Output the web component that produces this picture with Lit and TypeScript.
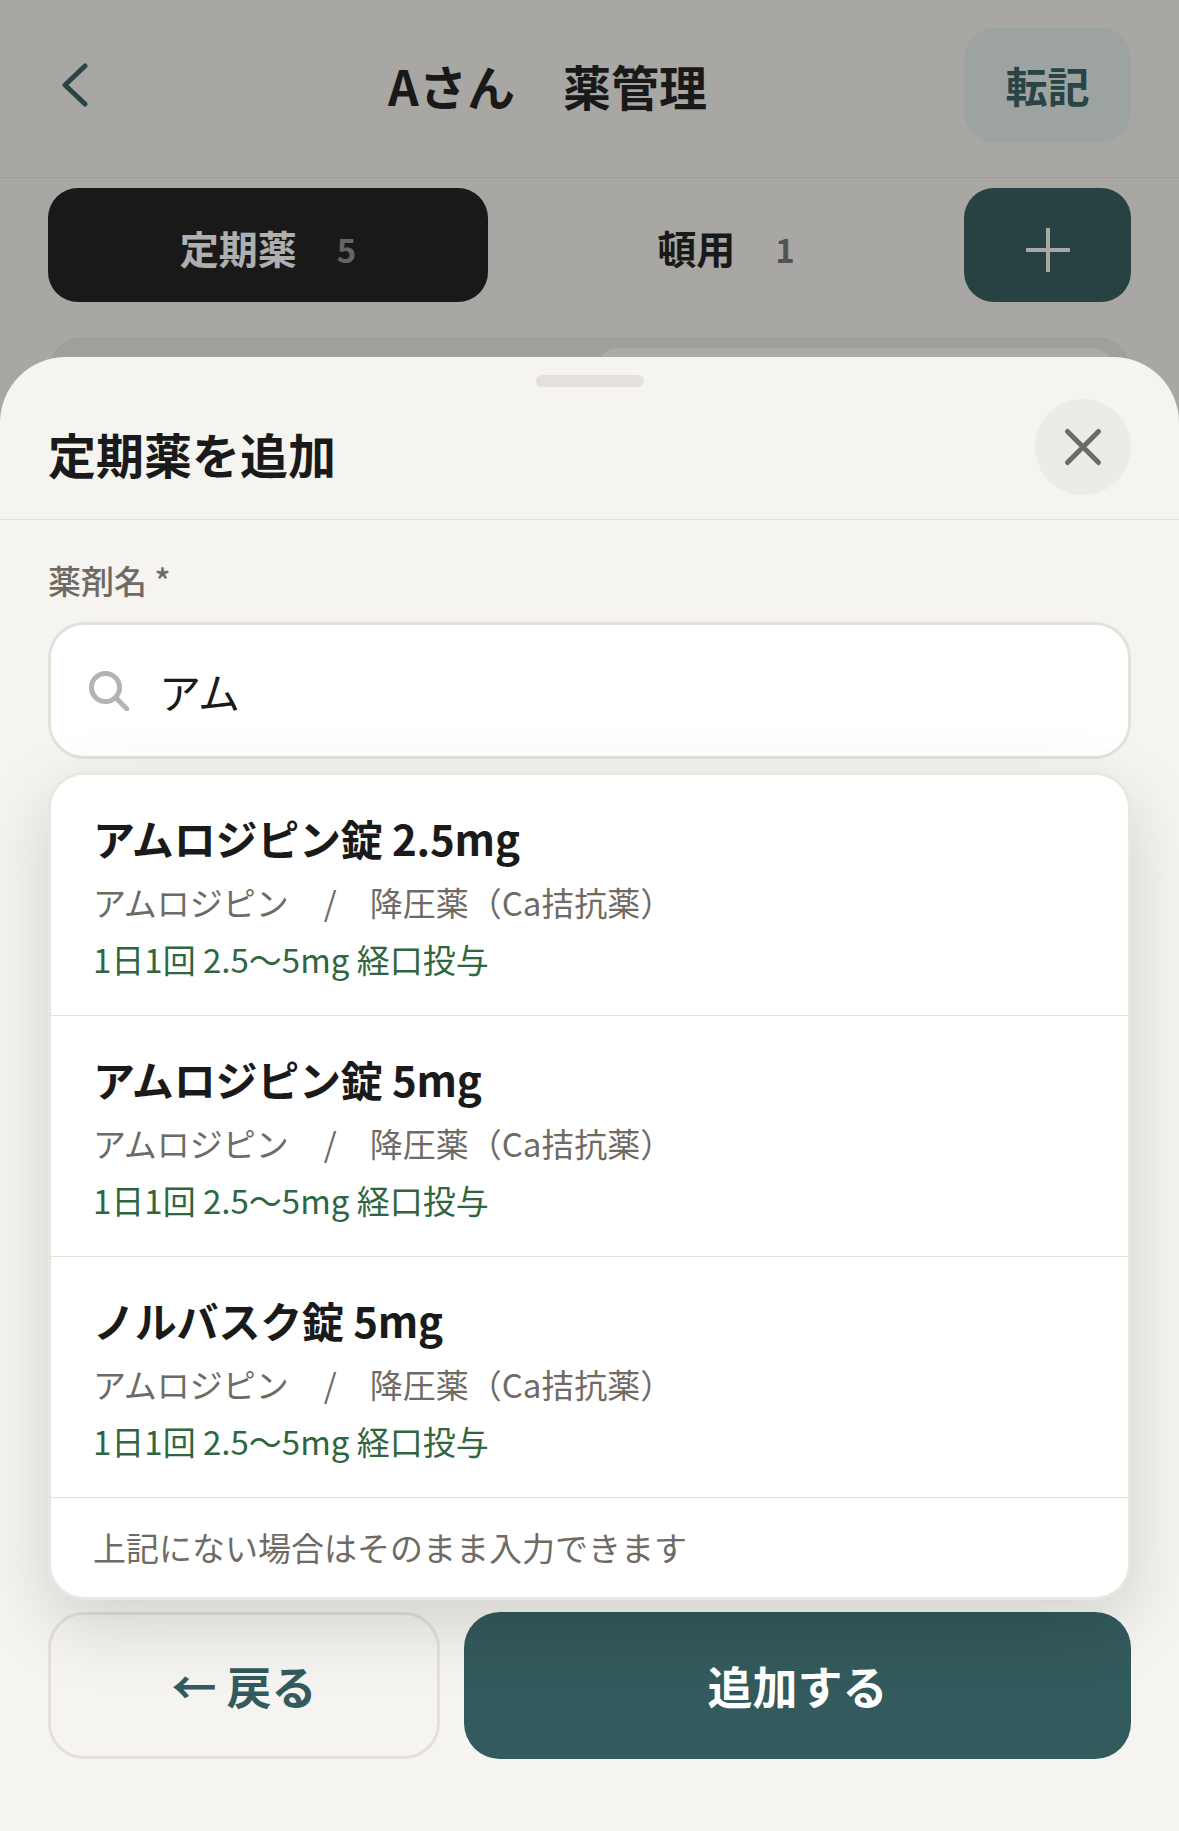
import { LitElement, html, css } from 'lit';
import { customElement } from 'lit/decorators.js';

const results = [
  { name: 'アムロジピン錠 2.5mg' },
  { name: 'アムロジピン錠 5mg' },
  { name: 'ノルバスク錠 5mg' },
];

@customElement('app-root')
export class AppRoot extends LitElement {
  static styles = css`
    :host {
      display: block;
      position: relative;
      width: 1179px;
      height: 1831px;
      overflow: hidden;
      background: #f5f3ee;
      font-family: "Noto Sans CJK JP", "Noto Sans", sans-serif;
      color: #1a1a1a;
    }

    /* page behind the sheet */
    .header {
      display: flex;
      align-items: center;
      justify-content: space-between;
      height: 178px;
      padding: 0 48px 8px 62px;
      box-sizing: border-box;
      border-bottom: 1px solid #e3e1da;
    }
    .back-icon { width: 28px; height: 44px; display: block; }
    .title {
      flex: 1;
      text-align: center;
      font-size: 48px;
      font-weight: 700;
      line-height: 1;
      padding-left: 41px;
    }
    .transfer {
      width: 167px;
      height: 114px;
      border-radius: 30px;
      background: #e3edea;
      color: #335a5c;
      font-size: 42px;
      font-weight: 700;
      display: flex;
      align-items: center;
      justify-content: center;
    }
    .tabs {
      display: grid;
      grid-template-columns: 440px 428px 167px;
      gap: 24px;
      padding: 10px 48px 0;
    }
    .tab {
      height: 114px;
      box-sizing: border-box;
      padding-top: 3px;
      border-radius: 30px;
      display: flex;
      align-items: center;
      justify-content: center;
      gap: 40px;
      font-size: 39px;
      font-weight: 700;
    }
    .tab.on { background: #1a1a1a; color: #fff; }
    .count { font-size: 33px; font-weight: 700; opacity: .6; padding-top: 4px; }
    .tab.on .count { opacity: .5; }
    .add {
      height: 114px;
      box-sizing: border-box;
      padding-top: 9px;
      border-radius: 30px;
      background: #315759;
      display: flex;
      align-items: center;
      justify-content: center;
    }
    .add svg { width: 44px; height: 44px; display: block; }
    .segment {
      margin: 36px 50px 0;
      height: 120px;
      padding: 9px 13px 0 544px;
      box-sizing: border-box;
      border: 1px solid #e3e1da;
      border-radius: 30px;
      background: #e7e6e2;
    }
    .segment div { height: 100%; background: #f9f9f9; border-radius: 24px; }
    .scrim {
      position: absolute;
      inset: 0;
      background: rgba(26, 26, 26, .35);
    }

    /* bottom sheet */
    .sheet {
      position: absolute;
      left: 0;
      right: 0;
      top: 357px;
      bottom: 0;
      background: #f5f4f0;
      border-radius: 66px 66px 0 0;
    }
    .handle {
      width: 108px;
      height: 12px;
      margin: 18px auto 0;
      border-radius: 6px;
      background: #e3e1da;
    }
    .sheet-head {
      display: flex;
      align-items: center;
      justify-content: space-between;
      height: 132px;
      padding: 0 48px;
      border-bottom: 1px solid #e3e1da;
    }
    .sheet-title {
      font-size: 48px;
      font-weight: 700;
      line-height: 1;
    }
    .close {
      width: 96px;
      height: 96px;
      margin-bottom: 12px;
      border-radius: 50%;
      background: #ecebe8;
      display: flex;
      align-items: center;
      justify-content: center;
    }
    .close svg { width: 40px; height: 40px; display: block; }
    .form { position: relative; padding: 36px 48px 0; }
    .label {
      font-size: 33px;
      font-weight: 500;
      line-height: 48px;
      color: #6f6b64;
    }
    .search {
      display: flex;
      align-items: center;
      gap: 30px;
      height: 137px;
      margin-top: 18px;
      padding: 0 38px;
      box-sizing: border-box;
      background: #fff;
      border: 3px solid #e3e1da;
      border-radius: 36px;
    }
    .search svg { width: 40px; height: 40px; display: block; }
    .search span { font-size: 42px; line-height: 1; }
    .dropdown {
      position: absolute;
      left: 48px;
      right: 48px;
      top: 252px;
      z-index: 2;
      background: #fff;
      border: 3px solid #e8e7e2;
      border-radius: 36px;
      box-shadow: 0 24px 72px rgba(0, 0, 0, .15);
      overflow: hidden;
    }
    .item {
      height: 241px;
      box-sizing: border-box;
      padding: 33px 42px 0;
      border-bottom: 1px solid #e3e1da;
    }
    .name { font-size: 42px; font-weight: 700; line-height: 60px; letter-spacing: -.2px; }
    .sub {
      font-size: 33px;
      line-height: 48px;
      margin-top: 10px;
      color: #6f6b64;
      display: flex;
      gap: 33px;
    }
    .slash { padding-left: 2px; }
    .dose { font-size: 33px; line-height: 48px; margin-top: 9px; color: #2f6640; }
    .note {
      height: 99px;
      box-sizing: border-box;
      padding: 0 42px 2px;
      display: flex;
      align-items: center;
      font-size: 33px;
      color: #6f6b64;
    }
    .actions {
      position: absolute;
      left: 48px;
      right: 48px;
      bottom: 72px;
      display: grid;
      grid-template-columns: 392px 667px;
      gap: 24px;
    }
    .btn {
      height: 147px;
      box-sizing: border-box;
      border-radius: 36px;
      display: flex;
      align-items: center;
      justify-content: center;
      font-size: 45px;
      font-weight: 700;
    }
    .btn.ghost { border: 3px solid #e3e1da; color: #335a5c; }
    .btn.primary { background: #335a5c; color: #fff; }
  `;

  render() {
    return html`
      <div class="header">
        <svg class="back-icon" viewBox="0 0 28 44" fill="none" stroke="#335a5c" stroke-width="5" stroke-linecap="round" stroke-linejoin="round">
          <path d="M23 3 3 22l20 19" />
        </svg>
        <div class="title">Aさん　薬管理</div>
        <div class="transfer">転記</div>
      </div>
      <div class="tabs">
        <div class="tab on">定期薬<span class="count">5</span></div>
        <div class="tab">頓用<span class="count">1</span></div>
        <div class="add">
          <svg viewBox="0 0 44 44" fill="none" stroke="#f5f4f0" stroke-width="4"><path d="M22 0v44M0 22h44" /></svg>
        </div>
      </div>
      <div class="segment"><div></div></div>
      <div class="scrim"></div>

      <div class="sheet">
        <div class="handle"></div>
        <div class="sheet-head">
          <div class="sheet-title">定期薬を追加</div>
          <div class="close">
            <svg viewBox="0 0 40 40" fill="none" stroke="#6d6b66" stroke-width="5" stroke-linecap="round"><path d="M4.5 4.5l31 31M35.500 4.500l-31 31" /></svg>
          </div>
        </div>
        <div class="form">
          <div class="label">薬剤名 *</div>
          <div class="search">
            <svg viewBox="0 0 40 40" fill="none" stroke="#b3b3b0" stroke-width="5" stroke-linecap="round"><circle cx="16.500" cy="16.500" r="14" /><path d="M26.500 26.500 38 38" /></svg>
            <span>アム</span>
          </div>
          <div class="dropdown">
            ${results.map(r => html`
              <div class="item">
                <div class="name">${r.name}</div>
                <div class="sub"><span>アムロジピン</span><span class="slash">/</span><span>降圧薬（Ca拮抗薬）</span></div>
                <div class="dose">1日1回 2.5～5mg 経口投与</div>
              </div>
            `)}
            <div class="note">上記にない場合はそのまま入力できます</div>
          </div>
        </div>
        <div class="actions">
          <div class="btn ghost">← 戻る</div>
          <div class="btn primary">追加する</div>
        </div>
      </div>
    `;
  }
}
